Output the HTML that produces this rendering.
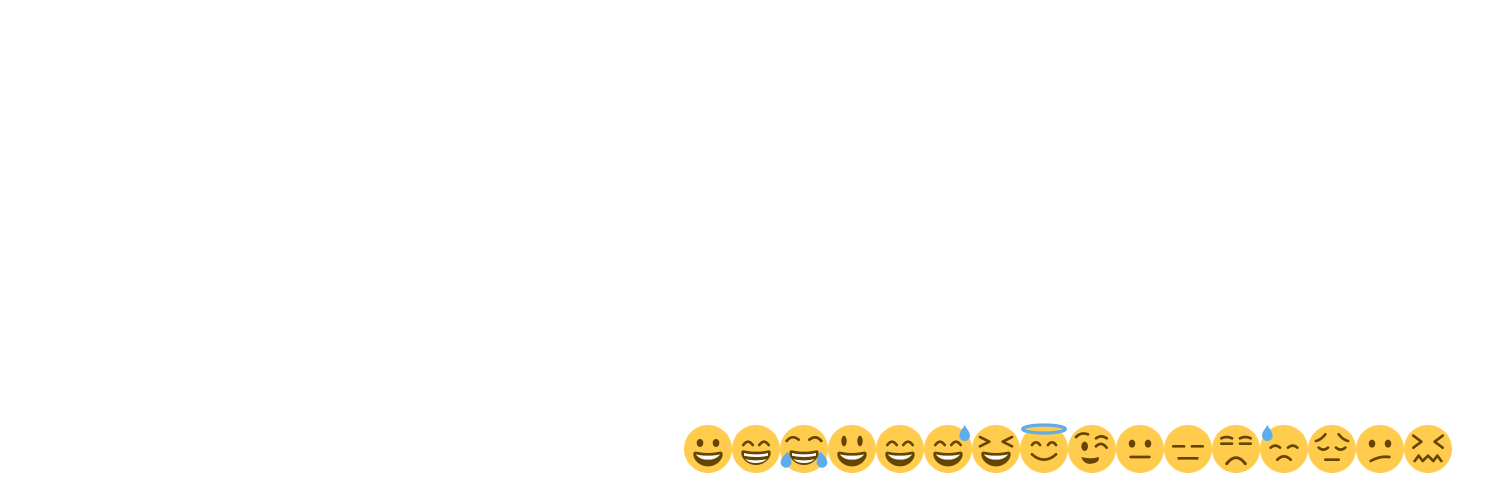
<!DOCTYPE html>
<html><head><meta charset="utf-8"><style>
html,body{margin:0;padding:0;background:#fff;width:1500px;height:500px;overflow:hidden}
.row{position:absolute;left:684px;top:425px;display:flex}
svg{width:48px;height:48px;display:block;overflow:visible}
</style></head><body>
<div class="row">
<svg viewBox="0 0 36 36"><circle cx="18" cy="18" r="18" fill="#FFCC4D"/><path d="M18 21c-3.6 0-6-.4-9-1-.7-.1-2 0-2 2 0 4 4.6 9 11 9s11-5 11-9c0-2-1.3-2.1-2-2-3 .6-5.4 1-9 1z" fill="#664500"/><path d="M9 22s3 1 9 1 9-1 9-1-2 4-9 4-9-4-9-4z" fill="#fff"/><ellipse cx="12" cy="13.5" rx="2.5" ry="3" fill="#664500"/><ellipse cx="24" cy="13.5" rx="2.5" ry="3" fill="#664500"/></svg>
<svg viewBox="0 0 36 36"><circle cx="18" cy="18" r="18" fill="#FFCC4D"/><path d="M18 20c-3.6 0-6-.4-9-1-.7-.1-2 0-2 2 0 4 4.6 9 11 9s11-5 11-9c0-2-1.3-2.1-2-2-3 .6-5.4 1-9 1z" fill="#664500"/><path d="M9 21s3 1 9 1 9-1 9-1v2s-3 1-9 1-9-1-9-1z M10 25.5s3 1 8 1 8-1 8-1-2 3-8 3-8-3-8-3z" fill="#fff"/><path d="M8.5 15q3.5-5 7 0M20.5 15q3.5-5 7 0" stroke="#664500" stroke-width="2" fill="none" stroke-linecap="round"/></svg>
<svg viewBox="0 0 36 36"><circle cx="18" cy="18" r="18" fill="#FFCC4D"/><path d="M18 20c-3.6 0-6-.4-9-1-.7-.1-2 0-2 2 0 4 4.6 9 11 9s11-5 11-9c0-2-1.3-2.1-2-2-3 .6-5.4 1-9 1z" fill="#664500"/><path d="M9 21s3 1 9 1 9-1 9-1v2s-3 1-9 1-9-1-9-1z M10 25.5s3 1 8 1 8-1 8-1-2 3-8 3-8-3-8-3z" fill="#fff"/><path d="M5 12q4-5 9-1M22 11q5-4 9 1" stroke="#664500" stroke-width="2" fill="none" stroke-linecap="round"/><path d="M5.5 20c-2 2.5-5 5-5 8a4 4 0 0 0 8 0c0-3-1.5-5.5-3-8z M30.5 20c-1.5 2.5-3 5-3 8a4 4 0 0 0 8 0c0-3-3-5.5-5-8z" fill="#5DADEC"/></svg>
<svg viewBox="0 0 36 36"><circle cx="18" cy="18" r="18" fill="#FFCC4D"/><path d="M18 21c-3.6 0-6-.4-9-1-.7-.1-2 0-2 2 0 4 4.6 9 11 9s11-5 11-9c0-2-1.3-2.1-2-2-3 .6-5.4 1-9 1z" fill="#664500"/><path d="M9 22s3 1 9 1 9-1 9-1-2 4-9 4-9-4-9-4z" fill="#fff"/><ellipse cx="12" cy="12" rx="2" ry="4" fill="#664500"/><ellipse cx="24" cy="12" rx="2" ry="4" fill="#664500"/></svg>
<svg viewBox="0 0 36 36"><circle cx="18" cy="18" r="18" fill="#FFCC4D"/><path d="M18 21c-3.6 0-6-.4-9-1-.7-.1-2 0-2 2 0 4 4.6 9 11 9s11-5 11-9c0-2-1.3-2.1-2-2-3 .6-5.4 1-9 1z" fill="#664500"/><path d="M9 22s3 1 9 1 9-1 9-1-2 4-9 4-9-4-9-4z" fill="#fff"/><path d="M8.5 15q3.5-5 7 0M20.5 15q3.5-5 7 0" stroke="#664500" stroke-width="2" fill="none" stroke-linecap="round"/></svg>
<svg viewBox="0 0 36 36"><circle cx="18" cy="18" r="18" fill="#FFCC4D"/><path d="M18 21c-3.6 0-6-.4-9-1-.7-.1-2 0-2 2 0 4 4.6 9 11 9s11-5 11-9c0-2-1.3-2.1-2-2-3 .6-5.4 1-9 1z" fill="#664500"/><path d="M9 22s3 1 9 1 9-1 9-1-2 4-9 4-9-4-9-4z" fill="#fff"/><path d="M8.5 15q3.5-5 7 0M20.5 15q3.5-5 7 0" stroke="#664500" stroke-width="2" fill="none" stroke-linecap="round"/><path d="M30.5 0c-1.5 3-4 5-4 8a4 4 0 0 0 8 0c0-3-2.5-5-4-8z" fill="#5DADEC"/></svg>
<svg viewBox="0 0 36 36"><circle cx="18" cy="18" r="18" fill="#FFCC4D"/><path d="M18 21c-3.6 0-6-.4-9-1-.7-.1-2 0-2 2 0 4 4.6 9 11 9s11-5 11-9c0-2-1.3-2.1-2-2-3 .6-5.4 1-9 1z" fill="#664500"/><path d="M9 22s3 1 9 1 9-1 9-1-2 4-9 4-9-4-9-4z" fill="#fff"/><path d="M6 9l7 3.5-7 3.5M30 9l-7 3.5 7 3.5" stroke="#664500" stroke-width="2" fill="none" stroke-linecap="round" stroke-linejoin="round"/></svg>
<svg viewBox="0 0 36 36"><circle cx="18" cy="18" r="18" fill="#FFCC4D"/><ellipse cx="18" cy="3" rx="16" ry="3" fill="#FFCC4D" stroke="#5DADEC" stroke-width="2.4"/><path d="M9 22q9 8 18 0" stroke="#664500" stroke-width="2" fill="none" stroke-linecap="round"/><path d="M9 15q3-4 6 0M21 15q3-4 6 0" stroke="#664500" stroke-width="2" fill="none" stroke-linecap="round"/></svg>
<svg viewBox="0 0 36 36"><circle cx="18" cy="18" r="18" fill="#FFCC4D"/><ellipse cx="12.5" cy="16" rx="2.5" ry="3.5" fill="#664500"/><path d="M6 9q4-4 9-2M21 10q4-3 8 0M21 16q4-4 8 1" stroke="#664500" stroke-width="2" fill="none" stroke-linecap="round"/><path d="M10 24q2 6 8 5t5-5q-6 2-13 0z" fill="#664500"/></svg>
<svg viewBox="0 0 36 36"><circle cx="18" cy="18" r="18" fill="#FFCC4D"/><ellipse cx="12" cy="14" rx="2.5" ry="3" fill="#664500"/><ellipse cx="24" cy="14" rx="2.5" ry="3" fill="#664500"/><path d="M11 24h14" stroke="#664500" stroke-width="2" stroke-linecap="round"/></svg>
<svg viewBox="0 0 36 36"><circle cx="18" cy="18" r="18" fill="#FFCC4D"/><path d="M7 16h8M21 16h8M11 25h14" stroke="#664500" stroke-width="2" stroke-linecap="round"/></svg>
<svg viewBox="0 0 36 36"><circle cx="18" cy="18" r="18" fill="#FFCC4D"/><path d="M7 10q4-2 8 0M21 10q4-2 8 0M7 14h8M21 14h8" stroke="#664500" stroke-width="2" fill="none" stroke-linecap="round"/><path d="M11 29q7-9 14 0" stroke="#664500" stroke-width="2.2" fill="none" stroke-linecap="round"/></svg>
<svg viewBox="0 0 36 36"><circle cx="18" cy="18" r="18" fill="#FFCC4D"/><path d="M8 17q3.5-3 7 0M21 17q3.5-3 7 0" stroke="#664500" stroke-width="2" fill="none" stroke-linecap="round"/><path d="M13 26q5-5 10 0" stroke="#664500" stroke-width="2" fill="none" stroke-linecap="round"/><path d="M5.5 0c-1.5 3-4 5-4 8a4 4 0 0 0 8 0c0-3-2.5-5-4-8z" fill="#5DADEC"/></svg>
<svg viewBox="0 0 36 36"><circle cx="18" cy="18" r="18" fill="#FFCC4D"/><path d="M6 12q4-1 7-5M30 12q-4-1-7-5M8 17q3.5 3 7 0M21 17q3.5 3 7 0M13 26h10" stroke="#664500" stroke-width="2" fill="none" stroke-linecap="round"/></svg>
<svg viewBox="0 0 36 36"><circle cx="18" cy="18" r="18" fill="#FFCC4D"/><ellipse cx="12" cy="14" rx="2.5" ry="3" fill="#664500"/><ellipse cx="24" cy="14" rx="2.5" ry="3" fill="#664500"/><path d="M11 27q7-4 14-3" stroke="#664500" stroke-width="2" fill="none" stroke-linecap="round"/></svg>
<svg viewBox="0 0 36 36"><circle cx="18" cy="18" r="18" fill="#FFCC4D"/><path d="M7 8l6 4.5-6 4.5M29 8l-6 4.5 6 4.5M8 27l3-4 3 4 4-4 4 4 3-4 3 4" stroke="#664500" stroke-width="2" fill="none" stroke-linecap="round" stroke-linejoin="round"/></svg>
</div>
</body></html>
